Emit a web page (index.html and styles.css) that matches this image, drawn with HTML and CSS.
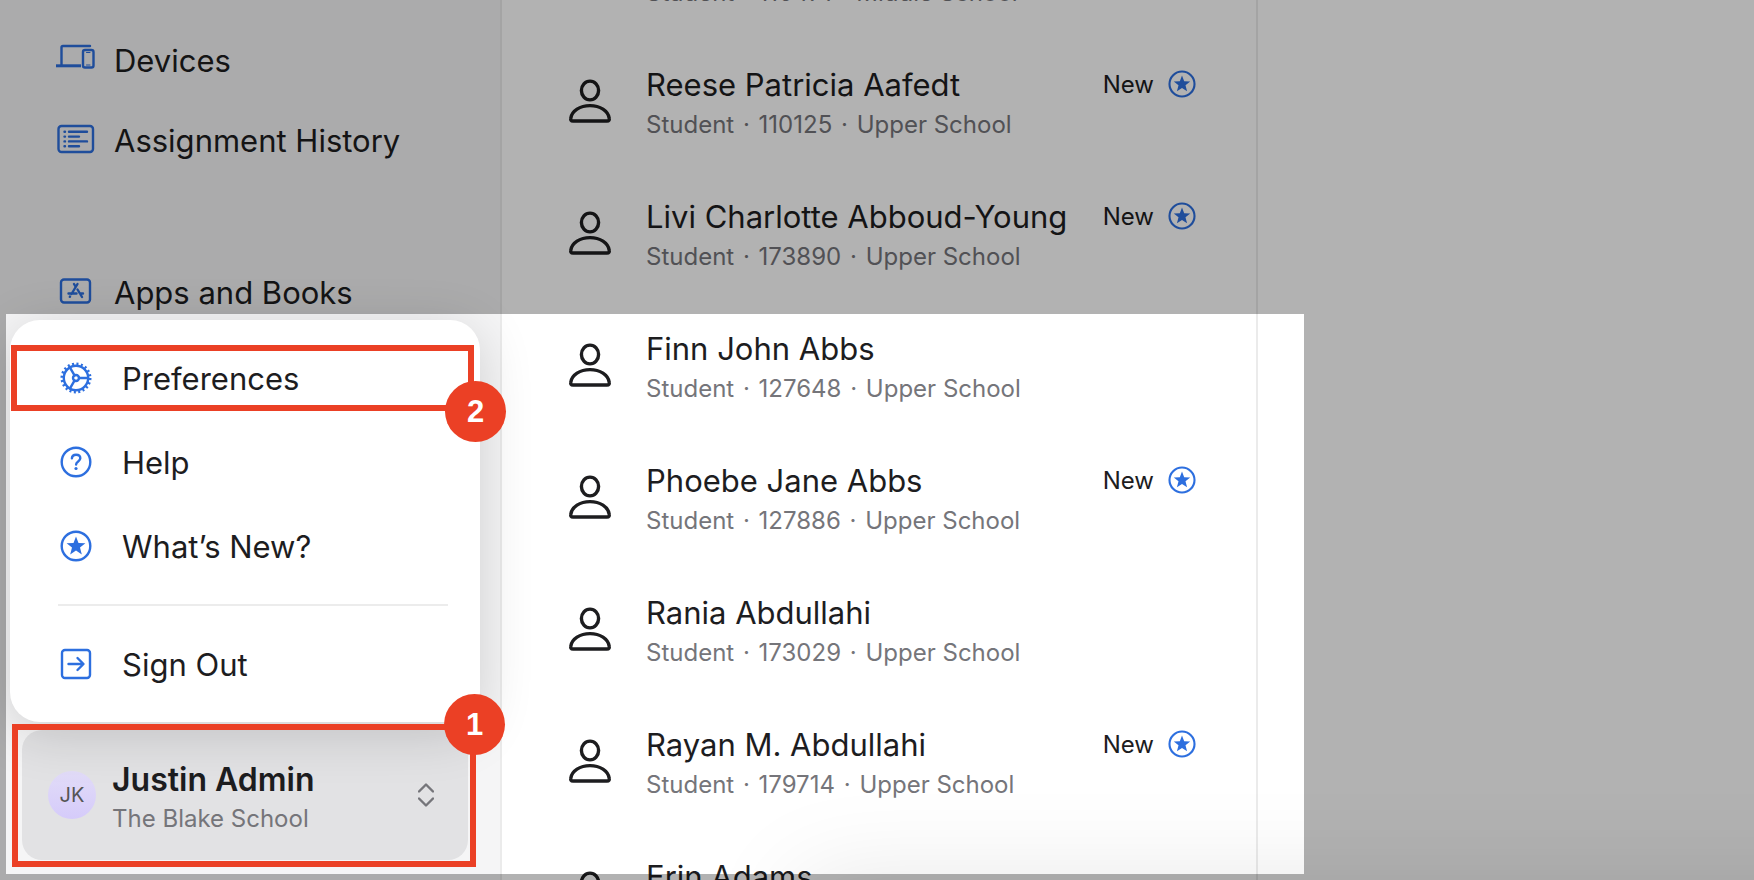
FILE: index.html
```
<!DOCTYPE html>
<html lang="en">
<head>
    <meta charset="utf-8">
    <title>Users</title>
    <link rel="stylesheet" href="styles.css">
</head>
<body>
    <!-- shared icons -->
    <svg class="sprite" aria-hidden="true">
        <symbol id="person" viewBox="0 0 42 44">
            <ellipse cx="21" cy="11.5" rx="8.6" ry="9.4"/>
            <path d="M4 42 C2 42 1.5 40.8 1.8 39.2 C2.8 31.8 11 26.6 21 26.6 C31 26.6 39.2 31.8 40.2 39.2 C40.5 40.8 40 42 38 42 Z"/>
        </symbol>
        <symbol id="star" viewBox="0 0 32 32">
            <circle cx="16" cy="16" r="14.3"/>
            <path class="solid" d="M16 6.4 L18.5 12.9 L25.4 13.2 L20 17.5 L21.8 24.4 L16 20.5 L10.2 24.4 L12 17.5 L6.6 13.2 L13.5 12.9 Z"/>
        </symbol>
    </svg>

    <div class="app">
        <aside class="sidebar">
            <nav class="nav">
                <a class="nav-item" href="#">
                    <svg class="nav-icon" viewBox="0 0 40 32">
                        <path d="M5.5 22 V4.5 Q5.5 3 7 3 H34"/>
                        <path class="thick" d="M0 22.8 H25"/>
                        <rect x="27" y="7" width="10.5" height="17.5" rx="2"/>
                        <path class="thin" d="M30.5 9.5 H34 M30.5 22 H34"/>
                    </svg>
                    Devices
                </a>
                <a class="nav-item" href="#">
                    <svg class="nav-icon" viewBox="0 0 40 32">
                        <rect x="2.5" y="3" width="34.5" height="26" rx="3"/>
                        <path d="M13 8.8 H31 M13 13.6 H23 M13 18.4 H31 M13 23.2 H23"/>
                        <path d="M8.5 8.8 H9 M8.5 13.6 H9 M8.5 18.4 H9 M8.5 23.2 H9"/>
                    </svg>
                    Assignment History
                </a>
                <a class="nav-item nav-group" href="#">
                    <svg class="nav-icon" viewBox="0 0 40 32">
                        <rect x="5" y="4.5" width="29" height="23" rx="3"/>
                        <path d="M21.5 9 L15.5 19 M18 9 L19.5 11.5 M21.5 14.5 L26 22 M12.5 18.5 H20.5 M24 18.5 H27 M14 21.5 L13.8 21.8"/>
                    </svg>
                    Apps and Books
                </a>
            </nav>

            <div class="menu">
                <a class="menu-item" href="#">
                    <svg class="icon" viewBox="0 0 32 32">
                        <circle class="teeth" cx="16" cy="16" r="14"/>
                        <circle cx="16" cy="16" r="12.2"/>
                        <circle cx="16" cy="16" r="3"/>
                        <path d="M19 16 H28 M14.5 13.4 L10 5.6 M14.5 18.6 L10 26.4"/>
                    </svg>
                    Preferences
                </a>
                <a class="menu-item" href="#">
                    <svg class="icon" viewBox="0 0 32 32">
                        <circle cx="16" cy="16" r="14.3"/>
                        <path d="M11.9 12.4 C12 9.9 13.7 8.7 16.1 8.7 C18.6 8.7 20.3 10.2 20.3 12.3 C20.3 15.5 16.1 15.4 16.1 18.5"/>
                        <circle class="solid" cx="16" cy="22.5" r="1.6"/>
                    </svg>
                    Help
                </a>
                <a class="menu-item" href="#">
                    <svg class="icon"><use href="#star"/></svg>
                    What’s New?
                </a>
                <hr class="menu-line">
                <a class="menu-item" href="#">
                    <svg class="icon" viewBox="0 0 32 32">
                        <rect x="2" y="2" width="28" height="28" rx="3"/>
                        <path d="M8.5 16 H23 M17.5 10 L23.5 16 L17.5 22"/>
                    </svg>
                    Sign Out
                </a>
            </div>

            <button class="account" type="button">
                <span class="avatar">JK</span>
                <span class="account-text">
                    <span class="account-name">Justin Admin</span>
                    <span class="account-org">The Blake School</span>
                </span>
                <svg class="chevrons" viewBox="0 0 16 24">
                    <path d="M1 8.5 L8 1.5 L15 8.5 M1 15.5 L8 22.5 L15 15.5"/>
                </svg>
            </button>
        </aside>

        <main class="people">
            <div class="person">
                <svg class="person-icon"><use href="#person"/></svg>
                <div class="person-text">
                    <div class="person-name">&nbsp;</div>
                    <div class="person-info">Student <i>·</i> 116471 <i>·</i> Middle School</div>
                </div>
            </div>
            <div class="person">
                <svg class="person-icon"><use href="#person"/></svg>
                <div class="person-text">
                    <div class="person-name">Reese Patricia Aafedt</div>
                    <div class="person-info">Student <i>·</i> 110125 <i>·</i> Upper School</div>
                </div>
                <div class="new">New <svg class="new-icon"><use href="#star"/></svg></div>
            </div>
            <div class="person">
                <svg class="person-icon"><use href="#person"/></svg>
                <div class="person-text">
                    <div class="person-name">Livi Charlotte Abboud-Young</div>
                    <div class="person-info">Student <i>·</i> 173890 <i>·</i> Upper School</div>
                </div>
                <div class="new">New <svg class="new-icon"><use href="#star"/></svg></div>
            </div>
            <div class="person">
                <svg class="person-icon"><use href="#person"/></svg>
                <div class="person-text">
                    <div class="person-name">Finn John Abbs</div>
                    <div class="person-info">Student <i>·</i> 127648 <i>·</i> Upper School</div>
                </div>
            </div>
            <div class="person">
                <svg class="person-icon"><use href="#person"/></svg>
                <div class="person-text">
                    <div class="person-name">Phoebe Jane Abbs</div>
                    <div class="person-info">Student <i>·</i> 127886 <i>·</i> Upper School</div>
                </div>
                <div class="new">New <svg class="new-icon"><use href="#star"/></svg></div>
            </div>
            <div class="person">
                <svg class="person-icon"><use href="#person"/></svg>
                <div class="person-text">
                    <div class="person-name">Rania Abdullahi</div>
                    <div class="person-info">Student <i>·</i> 173029 <i>·</i> Upper School</div>
                </div>
            </div>
            <div class="person">
                <svg class="person-icon"><use href="#person"/></svg>
                <div class="person-text">
                    <div class="person-name">Rayan M. Abdullahi</div>
                    <div class="person-info">Student <i>·</i> 179714 <i>·</i> Upper School</div>
                </div>
                <div class="new">New <svg class="new-icon"><use href="#star"/></svg></div>
            </div>
            <div class="person">
                <svg class="person-icon"><use href="#person"/></svg>
                <div class="person-text">
                    <div class="person-name">Erin Adams</div>
                </div>
            </div>
        </main>
        <section class="detail"></section>
        <div class="bottom-shade"></div>
    </div>

    <!-- walkthrough -->
    <div class="spotlight"></div>
    <div class="step step-two"><span class="step-number">2</span></div>
    <div class="step step-one"><span class="step-number">1</span></div>
</body>
</html>
```
FILE: styles.css
```
* {
    box-sizing: border-box;
}
body {
    margin: 0;
    height: 100vh;
    position: relative;
    overflow: hidden;
    font-family: Inter, "Liberation Sans", sans-serif;
    font-size: 31px;
    color: #1d1d1f;
    background: white;
}
a {
    color: inherit;
    text-decoration: none;
}
svg {
    fill: none;
    stroke: #2d6fdf;
    stroke-width: 2.4;
    stroke-linecap: round;
    stroke-linejoin: round;
    flex: none;
}
.sprite {
    position: absolute;
    width: 0;
    height: 0;
}
.solid {
    fill: #2d6fdf;
    stroke: none;
}
.thick {
    stroke-width: 3;
    stroke-linecap: butt;
}
.thin {
    stroke-width: 1;
}
.teeth {
    stroke-width: 3;
    stroke-dasharray: 2 2.4;
    stroke-linecap: butt;
}
.app {
    position: relative;
    display: flex;
    height: 100%;
    overflow: hidden;
}

/* Sidebar */
.sidebar {
    width: 502px;
    flex: none;
    display: flex;
    flex-direction: column;
    padding: 20px 32px 20px 10px;
    background: #f5f5f6;
    border-right: 2px solid #ebebeb;
}
.nav {
    padding-left: 46px;
}
.nav-item {
    display: flex;
    align-items: center;
    gap: 18px;
    height: 80px;
}
.nav-group {
    margin-top: 72px;
}
.nav-icon {
    width: 40px;
    height: 32px;
    margin-bottom: 2px;
}
.menu {
    position: relative;
    z-index: 2;
    margin-top: -12px;
    margin-right: -12px;
    padding: 16px 32px 16px 48px;
    background: white;
    border-radius: 30px;
    box-shadow: 0 10px 54px rgba(0, 0, 0, 0.16);
}
.menu-item {
    display: flex;
    align-items: center;
    gap: 30px;
    height: 84px;
    padding-left: 2px;
}
.icon {
    width: 32px;
    height: 32px;
}
.menu-line {
    margin: 16px 0;
    border: 0;
    border-top: 2px solid #ececec;
}
.account {
    display: flex;
    align-items: center;
    height: 130px;
    margin: 8px 0 0 12px;
    padding: 0 34px 0 26px;
    border: 0;
    border-radius: 20px;
    background: #e2e2e4;
    color: #1d1d1f;
    font: inherit;
    text-align: left;
}
.avatar {
    width: 48px;
    height: 48px;
    margin-right: 16px;
    border-radius: 50%;
    background: linear-gradient(#e2dcf8, #d5cbfa);
    color: #555;
    font-size: 20px;
    line-height: 48px;
    text-align: center;
}
.account-text {
    flex: 1;
    padding-top: 8px;
}
.account-name {
    display: block;
    font-size: 32px;
    font-weight: 600;
    line-height: 40px;
}
.account-org {
    display: block;
    font-size: 24px;
    line-height: 38px;
    color: #75757a;
}
.chevrons {
    width: 16px;
    height: 24px;
    stroke: #75757a;
}

/* List of people */
.people {
    flex: none;
    width: 756px;
    margin-top: -97px;
    border-right: 2px solid #ebebeb;
}
.person {
    display: flex;
    align-items: center;
    height: 132px;
    padding: 0 60px 0 67px;
}
.person-icon {
    width: 42px;
    height: 44px;
    margin-right: 35px;
    stroke: #1d1d1f;
    stroke-width: 3.4;
}
.person-text {
    flex: 1;
    align-self: flex-start;
    padding-top: 29px;
}
.person-name {
    line-height: 42px;
}
.person-info {
    font-size: 24px;
    line-height: 38px;
    color: #75757a;
}
.person-info i {
    margin: 0 2px;
    font-style: normal;
}
.new {
    display: flex;
    align-items: center;
    gap: 14px;
    align-self: flex-start;
    height: 98px;
    font-size: 24px;
}
.new-icon {
    width: 28px;
    height: 28px;
}
.detail {
    flex: 1;
}
.bottom-shade {
    position: absolute;
    top: 100%;
    left: 800px;
    right: -200px;
    height: 200px;
    box-shadow: 0 0 100px rgba(0, 0, 0, 0.1);
}

/* Walkthrough */
.spotlight {
    position: absolute;
    z-index: 3;
    left: 6px;
    top: 314px;
    width: 1298px;
    height: 560px;
    box-shadow: 0 0 0 2000px rgba(0, 0, 0, 0.3);
}
.step {
    position: absolute;
    z-index: 4;
    border: 6px solid #eb4025;
}
.step-two {
    left: 11px;
    top: 345px;
    width: 463px;
    height: 66px;
}
.step-one {
    left: 12px;
    top: 724px;
    width: 464px;
    height: 143px;
}
.step-number {
    position: absolute;
    right: -38px;
    width: 61px;
    height: 61px;
    border-radius: 50%;
    background: #eb4025;
    color: white;
    font-family: "Liberation Sans", Arial, sans-serif;
    font-weight: 700;
    line-height: 61px;
    text-align: center;
}
.step-two .step-number {
    top: 30px;
}
.step-one .step-number {
    top: -36px;
    right: -35px;
}
```
